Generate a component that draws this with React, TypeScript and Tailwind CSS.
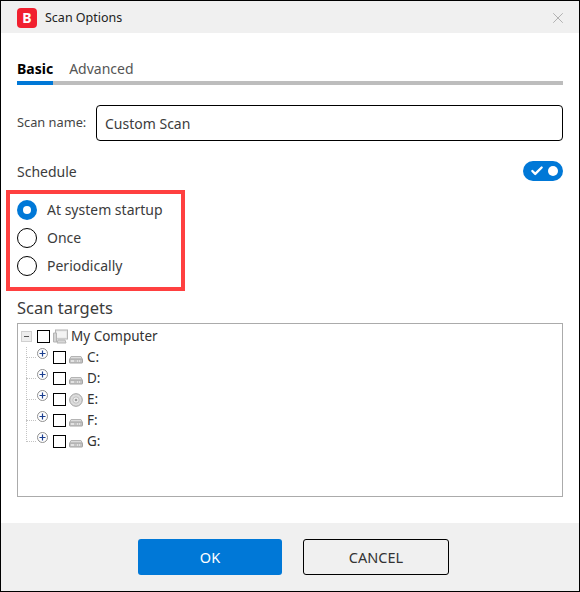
import { Check, X } from 'lucide-react'

const font = "font-['Noto_Sans',sans-serif]"

function DriveIcon() {
  return (
    <svg width="14" height="14" viewBox="0 0 14 14">
      <path d="M2 5.5h10l1.5 3H.5z" fill="#dcdcdc" stroke="#b4b4b4" />
      <rect x="0.5" y="8" width="13" height="4" rx="0.5" fill="#c4c4c4" stroke="#a4a4a4" />
      <rect x="2" y="9.5" width="3" height="1" fill="#fff" />
      <rect x="8" y="9.5" width="1" height="1" fill="#fff" />
      <rect x="10" y="9.5" width="1" height="1" fill="#fff" />
    </svg>
  )
}

function DiscIcon() {
  return (
    <svg width="14" height="14" viewBox="0 0 14 14">
      <circle cx="7" cy="7" r="6.3" fill="#dcdcdc" stroke="#a0a0a0" />
      <circle cx="7" cy="7" r="3.2" fill="#efefef" stroke="#c0c0c0" />
      <circle cx="7" cy="7" r="1.3" fill="#9a9a9a" />
    </svg>
  )
}

function ComputerIcon() {
  return (
    <svg width="15" height="15" viewBox="0 0 15 15">
      <rect x="2.5" y="1" width="12" height="9" fill="#e6e6e6" stroke="#b4b4b4" />
      <rect x="4" y="2.5" width="9" height="6" fill="#f4f4f4" />
      <path d="M0.5 4v9h3V4z" fill="#d4d4d4" stroke="#b4b4b4" />
      <path d="M5 11h7l1 3H4z" fill="#d8d8d8" stroke="#b4b4b4" />
    </svg>
  )
}

function PlusIcon() {
  return (
    <svg width="11" height="11" viewBox="0 0 11 11">
      <circle cx="5.5" cy="5.5" r="5" fill="#fff" stroke="#8f8f8f" />
      <path d="M2.5 5.5h6M5.5 2.5v6" stroke="#1c3f8f" strokeWidth="1.2" />
    </svg>
  )
}

function Radio({ label, checked }: { label: string; checked?: boolean }) {
  return (
    <div className="flex h-[28px] items-center gap-[10px]">
      {checked ? (
        <span className="flex h-[20px] w-[20px] items-center justify-center rounded-full bg-[#0078d7]">
          <span className="h-[8px] w-[8px] rounded-full bg-white" />
        </span>
      ) : (
        <span className="h-[20px] w-[20px] rounded-full border-[1.5px] border-black bg-white" />
      )}
      <span className="-mt-[2px] text-[14px] text-[#3c3c3c]">{label}</span>
    </div>
  )
}

const drives = [
  { name: 'C:' },
  { name: 'D:' },
  { name: 'E:', disc: true },
  { name: 'F:' },
  { name: 'G:' },
]

export default function App() {
  return (
    <div className={`${font} flex h-[592px] w-[580px] flex-col border border-black bg-white`}>
      {/* title bar */}
      <div className="flex h-[32px] shrink-0 items-center bg-[#f0f0f0] pl-[16px] pr-[12px] pt-[1px]">
        <span className="flex h-[20px] w-[20px] items-center justify-center rounded-[4px] bg-[#f1202f] text-[14px] font-bold leading-none text-white">
          B
        </span>
        <span className="ml-[8px] pt-[1px] text-[12.5px] text-[#222]">Scan Options</span>
        <X className="ml-auto text-[#b0b0b0]" size={18} strokeWidth={1.3} />
      </div>

      <div className="flex flex-1 flex-col px-[16px]">
        {/* tabs */}
        <div className="mt-[24px] flex h-[24px] gap-[16px] text-[14px] leading-[24px]">
          <span className="font-bold text-black">Basic</span>
          <span className="text-[#555]">Advanced</span>
        </div>
        <div className="h-[4px] bg-[#bdbdbd]">
          <div className="h-[4px] w-[36px] bg-[#0078d7]" />
        </div>

        {/* scan name */}
        <div className="mt-[20px] flex items-center gap-[9px]">
          <span className="w-[70px] whitespace-nowrap text-[12.8px] text-[#444]">Scan name:</span>
          <div className="flex h-[36px] flex-1 items-center rounded-[4px] border border-black px-[8px] text-[14px] text-[#3c3c3c]">
            Custom Scan
          </div>
        </div>

        {/* schedule */}
        <div className="mt-[20px] flex h-[20px] items-center justify-between">
          <span className="text-[14px] text-[#3c3c3c]">Schedule</span>
          <span className="flex h-[20px] w-[40px] items-center justify-between rounded-full bg-[#0078d7] pl-[7px] pr-[5px]">
            <Check className="text-white" size={14} strokeWidth={4} />
            <span className="h-[10px] w-[10px] rounded-full bg-white" />
          </span>
        </div>

        {/* highlighted options */}
        <div className="-ml-[11px] mt-[9px] w-[179px] border-[4px] border-[#ff4040] pb-[7px] pl-[7px] pt-[2px]">
          <Radio label="At system startup" checked />
          <Radio label="Once" />
          <Radio label="Periodically" />
        </div>

        <div className="mt-[4px] h-[28px] text-[16.5px] leading-[26px] text-[#3c3c3c]">Scan targets</div>

        {/* tree */}
        <div className="h-[174px] border border-[#ababab] pl-[3px] pt-[2px] text-[13.5px] text-[#333]">
          <div className="flex h-[21px] items-center">
            <span className="flex h-[11px] w-[11px] items-center justify-center border border-[#d0d0d0] bg-[#eee]">
              <span className="h-[1px] w-[5px] bg-[#555]" />
            </span>
            <span className="ml-[5px] h-[13px] w-[13px] border border-black bg-white" />
            <span className="ml-[3px]">
              <ComputerIcon />
            </span>
            <span className="ml-[3px]">My Computer</span>
          </div>
          <div className="relative">
            <span className="absolute bottom-[10px] left-[5px] top-0 border-l border-dotted border-[#c4c4c4]" />
            {drives.map(d => (
              <div key={d.name} className="flex h-[21px] items-center pl-[5px]">
                <span className="w-[10px] border-t border-dotted border-[#c4c4c4]" />
                <span className="-mt-[8px] ml-[1px]">
                  <PlusIcon />
                </span>
                <span className="ml-[5px] h-[13px] w-[13px] border border-black bg-white" />
                <span className="ml-[3px]">{d.disc ? <DiscIcon /> : <DriveIcon />}</span>
                <span className="ml-[4px]">{d.name}</span>
              </div>
            ))}
          </div>
        </div>
      </div>

      {/* footer */}
      <div className="flex h-[68px] shrink-0 items-start gap-[21px] bg-[#f0f0f0] pl-[137px] pt-[16px] text-[14.5px]">
        <button className="h-[36px] w-[144px] rounded-[3px] bg-[#0078d7] pt-[1px] text-white">OK</button>
        <button className="h-[36px] w-[146px] rounded-[3px] border border-black pt-[1px] text-[#333]">CANCEL</button>
      </div>
    </div>
  )
}
